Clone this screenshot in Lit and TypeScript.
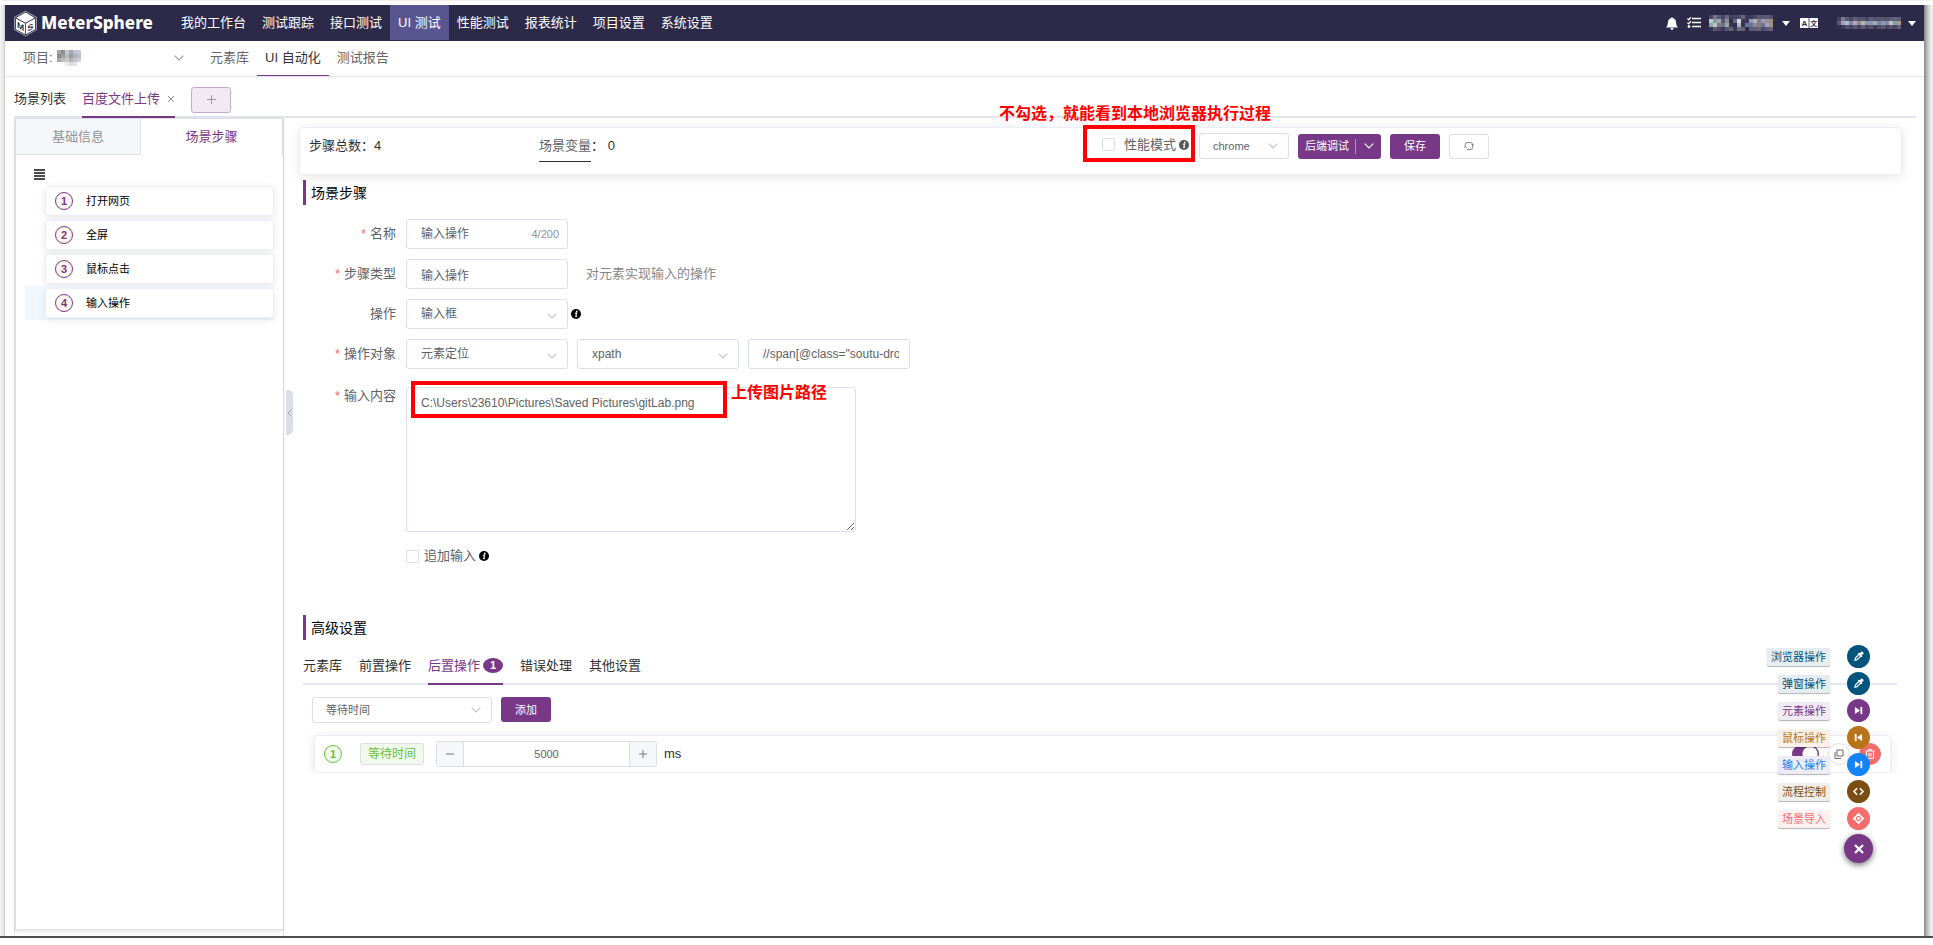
import { LitElement, html, css, svg, nothing } from "lit";
import { customElement, property, state } from "lit/decorators.js";
import { classMap } from "lit/directives/class-map.js";
import { styleMap } from "lit/directives/style-map.js";

const chevron = html`<svg class="chev" viewBox="0 0 10 6" width="10" height="6" aria-hidden="true">
  <path d="M0.7 0.7 L5 5 L9.3 0.7" fill="none" stroke="currentColor" stroke-width="1.2" />
</svg>`;

const info = html`<svg class="info" viewBox="0 0 12 12" width="10" height="10" aria-hidden="true">
  <circle cx="6" cy="6" r="6" fill="currentColor" />
  <circle cx="6.9" cy="2.9" r="1" fill="#fff" />
  <path d="M4.6 5.2 L6.8 4.8 L5.7 8.9 Q5.7 9.6 7.2 8.8" fill="none" stroke="#fff" stroke-width="1.3" />
</svg>`;

const dropper = svg`<path d="M3.6 12.6 L4.2 9.8 L9.2 4.8 L11.3 6.9 L6.3 11.9 Z" fill="none" stroke="#fff" stroke-width="1.5"/>
  <path d="M7.8 3.9 L12.2 8.3 M9.8 5.8 L12 3.6" fill="none" stroke="#fff" stroke-width="1.9"/>
  <circle cx="12.1" cy="3.9" r="2" fill="#fff"/>`;
const next = svg`<path d="M3.6 3.6 L10 8 L3.6 12.4 Z" fill="#fff"/><rect x="10.4" y="3.6" width="2.2" height="8.8" fill="#fff"/>`;
const prev = svg`<path d="M12.4 3.6 L6 8 L12.4 12.4 Z" fill="#fff"/><rect x="3.4" y="3.6" width="2.2" height="8.8" fill="#fff"/>`;
const code = svg`<path d="M6.3 4 L2.4 8 L6.3 12 M9.7 4 L13.6 8 L9.7 12" fill="none" stroke="#fff" stroke-width="1.9"/>`;
const focus = svg`<path d="M8 0.8 L11 4 H5 Z M8 15.2 L11 12 H5 Z M0.8 8 L4 5 V11 Z M15.2 8 L12 5 V11 Z" fill="#fff"/>
  <path d="M4 6.4 L6.4 4 H9.6 L12 6.4 V9.6 L9.6 12 H6.4 L4 9.6 Z" fill="none" stroke="#fff" stroke-width="1.6"/>
  <circle cx="8" cy="8" r="1.8" fill="#fff"/>`;

interface Action { label: string; color: string; tint: string; icon: unknown }

const ACTIONS: Action[] = [
  { label: "浏览器操作", color: "#00537a", tint: "#e5edf1", icon: dropper },
  { label: "弹窗操作", color: "#00537a", tint: "#e5edf1", icon: dropper },
  { label: "元素操作", color: "#783887", tint: "#f1ebf3", icon: next },
  { label: "鼠标操作", color: "#b8741a", tint: "#f9f1e8", icon: prev },
  { label: "输入操作", color: "#1483f6", tint: "#eeebf5", icon: next },
  { label: "流程控制", color: "#7a4e12", tint: "#f1eeea", icon: code },
  { label: "场景导入", color: "#f56c6c", tint: "#fdf0f0", icon: focus },
];

@customElement("pixel-mask")
class PixelMask extends LitElement {
  @property({ type: Array }) rows: string[] = [];
  @property({ type: Number }) cell = 4;

  static styles = css`
    :host { display: inline-flex; flex: none; }
    svg { display: block; }
  `;

  render() {
    const w = (this.rows[0]?.split(" ").length ?? 0) * this.cell;
    const h = this.rows.length * this.cell;
    return html`<svg width=${w} height=${h} shape-rendering="crispEdges" aria-hidden="true">
      ${this.rows.map((r, y) => r.split(" ").map((c, x) => c === "-" ? nothing : svg`
        <rect x=${x * this.cell} y=${y * this.cell} width=${this.cell} height=${this.cell} fill=${"#" + c}/>`))}
    </svg>`;
  }
}

@customElement("speed-dial")
class SpeedDial extends LitElement {
  static styles = css`
    :host { display: flex; flex-direction: column; align-items: flex-end; gap: 4px; }
    .row { display: flex; align-items: center; gap: 17px; height: 23px; padding-right: 3px; }
    .tip {
      font: 11px/18px "Liberation Sans", "Noto Sans CJK SC", sans-serif;
      padding: 0 4px; border-radius: 2px; box-shadow: 0 1px 1px rgba(0, 0, 0, 0.3);
    }
    button {
      border: 0; padding: 0; width: 23px; height: 23px; border-radius: 50%;
      display: grid; place-items: center; cursor: pointer;
    }
    .main {
      width: 29px; height: 29px; background: #783887; box-shadow: 0 2px 6px rgba(0, 0, 0, 0.55);
    }
  `;

  render() {
    return html`
      ${ACTIONS.map((a) => html`<div class="row">
        <span class="tip" style=${styleMap({ color: a.color, background: a.tint })}>${a.label}</span>
        <button aria-label=${a.label} style=${styleMap({ background: a.color })}>
          <svg viewBox="0 0 16 16" width="13" height="13">${a.icon}</svg>
        </button>
      </div>`)}
      <button class="main" aria-label="关闭">
        <svg viewBox="0 0 12 12" width="12" height="12"><path d="M2 2 L10 10 M10 2 L2 10" stroke="#fff" stroke-width="2.2"/></svg>
      </button>`;
  }
}

@customElement("app-root")
class AppRoot extends LitElement {
  @state() private wait = 5000;

  private nav = ["我的工作台", "测试跟踪", "接口测试", "UI 测试", "性能测试", "报表统计", "项目设置", "系统设置"];
  private steps = ["打开网页", "全屏", "鼠标点击", "输入操作"];
  private spaceMask = [
    "48465f 77738a 5c5a76 4a4866 6b6880 40405d 45435f 4d4a68 6a6780 3a3757 3b3959 4d4a68 5c5975 5b5873 5c5a75 55526e",
    "b9cdd0 8a9aa3 a8a6a5 5a5772 8e8b93 2c3158 67657f d7d8dc 3a3757 3b3a5c 8f95b3 b5b1a4 7c7d9b a29aa3 8d91ad a09070",
    "8ba4ad c3c1bb 7b7890 6e7489 a1a6a4 3a3757 32305a b2b7bd 35325a 5f7b98 6e7292 98839a 8a7e7a 6477a0 a9a3ba a0947f",
    "36345a 5b5875 4a4866 3c3a5a 55526e 66637b 3c3a5a 6d6a7f 66647b 2f2d4e 5d5a77 5f5c78 67637a 4f4c6b 5c5870 66637b",
  ];
  private userMask = [
    "45425f 7e7b90 5b5975 4b4967 625f79 55526e 57546f 4a4765 615e78 55526e 57546f 5a5772 55526e 5c5974 66637b 605d77",
    "5a5875 9ea2bd b6b9cc 8684a0 c2a3ae 7f8cab b9b6a4 9392ac 76a0b4 b7a4b7 7685a5 8a9bb4 8a88a3 b5c7b8 7e9db5 b09880",
    "312e4e 3f3c5c 55526e 48456a 5a5772 45425f 605d77 4b4867 585570 3f3c5c 534f6d 5d5a74 48455f 55526e 4c4968 625f76",
  ];
  private projectMask = [
    "a3a4a8 8d8e93 c9c9cc a7a9b0 bcc4cf c5ccd8",
    "8b8b8f 9fa0a3 b9bdc0 9c9ea2 aab3bf b6becb",
    "a9a9ad bdbdc0 c8c8cb b0b1b5 c3c4c8 c9ced8",
    "- - e9e9ea dcdcdf e2e2e5 -",
  ];

  static styles = css`
    :host {
      --brand: #783887;
      --line: #dcdfe6;
      --rule: #e4e7ed;
      display: flex; flex-direction: column; box-sizing: border-box;
      min-height: 100vh; padding-bottom: 7px; background: #fff; color: #303133;
      font: 13px/20px "Liberation Sans", "Noto Sans CJK SC", sans-serif;
    }
    * { box-sizing: border-box; }
    a { color: inherit; text-decoration: none; }
    button, input, select, textarea { font: inherit; color: inherit; margin: 0; }
    button { cursor: pointer; }
    svg { display: block; flex: none; }

    .frame {
      flex: 1; display: grid; grid-template-columns: 5px minmax(0, 1fr) 9px;
      border-top: 1px solid #f0f0f0; border-bottom: 2px solid #4d4d4d; padding-top: 4px;
    }
    .edge-l { background: linear-gradient(90deg, #f2f2f2, #eaeaea 60%, #c8c8c8); }
    .edge-r { background: linear-gradient(90deg, #868686, #c2c2c2 40%, #ececec 75%, #f0f0f0); }
    .app { position: relative; display: flex; flex-direction: column; background: #fff; }

    .top { display: flex; align-items: center; height: 36px; background: #2d2a49; color: #fff; padding: 0 8px 0 9px; }
    .brand { display: flex; align-items: center; gap: 4px; width: 159px; }
    .word { font: 800 17px/24px "Noto Sans", "Open Sans", sans-serif; }
    .nav { display: flex; align-self: stretch; flex: 1; }
    .nav a { display: flex; align-items: center; padding: 0 8px; height: 35px; }
    .nav a.on { background: #595591; }
    .tools { display: flex; align-items: center; }
    .tools .list { margin: 0 8px 0 9px; }
    .tools .caret { margin-left: 9px; }
    .tools .lang { margin: 0 19px 0 10px; }
    .tools .caret.last { margin-left: 7px; }

    .sub { display: flex; align-items: stretch; height: 36px; border-bottom: 1px solid #e5e5e9; color: #666; padding-left: 18px; }
    .project { display: flex; align-items: center; width: 161px; gap: 4px; margin-right: 18px; padding-bottom: 1px; }
    .project .chev { margin-left: auto; color: #999; }
    .sub a { display: flex; align-items: center; padding: 0 8px 1px; }
    .sub a.on { color: #303133; border-bottom: 1px solid var(--brand); }

    .tabs { display: flex; align-items: stretch; height: 41px; margin: 0 8px 0 9px; border-bottom: 2px solid #e3e4ec; }
    .tabs a { display: flex; align-items: center; padding-top: 5px; margin-right: 16px; gap: 7px; }
    .tabs a.on { color: var(--brand); border-bottom: 2px solid var(--brand); margin-bottom: -2px; }
    .tabs svg { color: #999; }
    .add {
      align-self: center; display: grid; place-items: center; width: 40px; height: 26px; padding: 0;
      margin-top: 6px; background: #f2eaf3; border: 1px solid #c9a9d0; border-radius: 3px; color: #999;
    }

    .body { flex: 1; display: flex; margin-left: 9px; }
    .side { width: 270px; flex: none; border-left: 1px solid #e6e6e9; border-right: 1px solid #e0e0e5; padding-bottom: 6px; display: flex; flex-direction: column; }
    .panel { flex: 1; border: solid var(--line); border-width: 1px 0 1px 1px; box-shadow: 0 2px 4px rgba(0, 0, 0, 0.1); }
    .ptabs { display: grid; grid-template-columns: 125px 1fr; height: 36px; }
    .ptabs button { border: 0; background: none; padding: 0; color: var(--brand); }
    .ptabs button.off { background: #f5f7fa; color: #909399; border: solid var(--line); border-width: 0 1px 1px 0; }
    .ptabs button.cur { border-right: 1px solid var(--line); }
    .menu { margin: 14px 0 4px 18px; display: block; border: 0; padding: 0; background: none; }
    .steps { list-style: none; margin: 0 9px; padding: 0; }
    .steps li { padding: 2px 0 2px 20px; }
    .steps li.on { background: #f0f7ff; }
    .step {
      display: flex; align-items: center; gap: 13px; height: 30px; width: 100%; padding: 0 9px; text-align: left;
      font-size: 11px; color: #000; background: #fff; border: 1px solid #ebeef5; border-radius: 3px;
      box-shadow: 0 2px 10px rgba(0, 0, 0, 0.09);
    }
    .num {
      display: grid; place-items: center; width: 18px; height: 18px; border-radius: 50%; flex: none;
      border: 1px solid var(--brand); background: #fcf6ee; color: var(--brand); font-weight: 700; font-size: 11px; line-height: 16px;
    }
    .num.green { border-color: #67c23a; background: #f0f9eb; color: #67c23a; }
    .grip { align-self: flex-start; display: grid; place-items: center; width: 7px; height: 45px; margin: 272px 0 0 2px; padding: 0; border: 0; background: var(--line); border-radius: 0 5px 5px 0; color: #999; }

    .main { flex: 1; min-width: 0; padding: 9px 22px 0 6px; }
    .bar {
      display: flex; align-items: center; height: 48px; padding: 0 9px 10px; border: 1px solid #ebeef5;
      border-radius: 4px; box-shadow: 0 2px 12px rgba(0, 0, 0, 0.1); position: relative;
    }
    .total { width: 230px; }
    .vars { width: 544px; display: flex; }
    .vars a { color: #606266; border-bottom: 1px solid #303133; padding: 5px 0; margin: -5px 0; }
    .mark { position: relative; display: flex; align-items: center; align-self: flex-start; height: 37px; margin-top: -3px; width: 112px; border: 4px solid #f00; padding: 2px 5px 0 15px; }
    .note { position: absolute; color: #f00; font-size: 16px; line-height: 24px; font-weight: 700; white-space: nowrap; }
    .mark .note { left: -88px; top: -27px; }
    .check { display: flex; align-items: center; color: #606266; gap: 5px; white-space: nowrap; }
    .mark .check { gap: 9px; }
    .mark .info { color: #555; margin-left: 3px; }
    .check input { appearance: none; width: 13px; height: 13px; border: 1px solid var(--line); border-radius: 1px; background: #fff; }
    .pick { display: grid; align-items: center; color: #606266; }
    .pick > * { grid-area: 1 / 1; }
    .pick .chev { justify-self: end; margin: 4px 11px 0 0; color: #c0c4cc; pointer-events: none; }
    select, .box, textarea { border: 1px solid var(--line); border-radius: 3px; background: #fff; color: #606266; outline: 0; }
    select { appearance: none; width: 100%; height: 30px; padding: 0 28px 0 14px; font-size: 12px; }
    .small select { height: 26px; font-size: 11px; padding-left: 13px; }
    .small .chev { margin-top: 0; }
    .browser { width: 90px; margin: 0 9px 0 4px; }
    .btn {
      display: flex; align-items: center; justify-content: center; height: 25px; padding: 0; border: 0;
      border-radius: 3px; background: var(--brand); color: #fff; font-size: 11px; width: 50px;
    }
    .split { width: 83px; margin-right: 9px; }
    .split .div { width: 1px; height: 15px; background: #b48fbd; margin: 0 8px 0 6px; }
    .btn.ghost { width: 40px; background: #fff; border: 1px solid var(--line); color: #777; margin-left: 9px; }

    h2 { display: flex; align-items: center; height: 25px; margin: 5px 0 14px 4px; padding-left: 5px; border-left: 3px solid var(--brand); font-size: 14px; font-weight: 400; color: #000; }
    .form { display: grid; grid-template-columns: 97px minmax(0, 1fr); gap: 10px; color: #606266; }
    .form > label { justify-self: end; align-self: center; }
    .form .req::before { content: "*"; color: #f56c6c; margin-right: 4px; }
    .line { display: flex; align-items: center; gap: 9px; }
    .line .info { color: #000; margin-left: -6px; }
    .f { width: 162px; }
    .box { height: 30px; padding: 0 10px 0 14px; font-size: 12px; }
    .counted { display: flex; align-items: center; padding-right: 8px; }
    .counted input { border: 0; outline: 0; padding: 0; background: none; flex: 1; min-width: 0; }
    .counted output { font-size: 11px; color: #909399; }
    .hint { color: #888; margin-left: 9px; }
    .form > label.up { align-self: start; margin-top: 7px; }
    .area { position: relative; width: 450px; margin-top: 8px; }
    textarea { display: block; width: 100%; height: 145px; padding: 5px 14px; font-size: 12px; resize: vertical; }
    .ring { position: absolute; left: 5px; top: -6px; width: 316px; height: 37px; border: 4px solid #f00; pointer-events: none; }
    .area .note { left: 325px; top: -6px; }
    .extra { grid-column: 2; margin-top: 4px; }

    .adv { margin: 49px 0 12px 4px; }
    .atabs { display: flex; height: 33px; margin: 0 5px 0 4px; border-bottom: 2px solid var(--rule); gap: 17px; }
    .atabs a { display: flex; gap: 3px; align-items: center; padding-bottom: 4px; }
    .atabs a.on { color: var(--brand); border-bottom: 2px solid var(--brand); margin-bottom: -2px; }
    .badge { width: 20px; height: 15px; border-radius: 50%; background: var(--brand); color: #fff; font: 700 11px/15px "Liberation Sans", sans-serif; text-align: center; }
    .addrow { display: flex; gap: 9px; padding: 12px 0 0 13px; }
    .addrow .pick { width: 180px; }
    .clip { overflow: hidden; padding: 12px 6px 0 4px; margin-right: 5px; }
    .op {
      display: flex; align-items: center; height: 38px; margin-left: 11px; padding: 0 9px; border: 1px solid #ebeef5;
      border-radius: 4px; box-shadow: 0 2px 12px rgba(0, 0, 0, 0.1);
    }
    .tag { margin: 0 12px 0 18px; padding: 0 7px; font-size: 12px; line-height: 20px; color: #67c23a; background: #f0f9eb; border: 1px solid #dcdfe6; border-radius: 3px; }
    .stepper { display: grid; grid-template-columns: 26px 1fr 26px; width: 221px; height: 26px; margin-right: 7px; border: 1px solid var(--line); border-radius: 3px; overflow: hidden; }
    .stepper button { border: 0; padding: 0; background: #f5f7fa; display: grid; place-items: center; color: #777; }
    .stepper input { width: 100%; border: solid var(--line); border-width: 0 1px; text-align: center; font-size: 11px; color: #606266; outline: 0; padding: 0; }
    .ends { margin-left: auto; display: flex; align-items: center; gap: 9px; }
    .switch { appearance: none; width: 27px; height: 18px; border-radius: 9px; background: radial-gradient(circle at 18px 9px, #fff 7px, transparent 8px), var(--brand); }
    .round { width: 22px; height: 22px; border-radius: 50%; border: 1px solid var(--line); background: #fff; padding: 0; display: grid; place-items: center; color: #666; }
    .round.del { background: #f56c6c; border-color: #f56c6c; color: #fff; }
    speed-dial { position: absolute; right: 51px; bottom: 73px; }
  `;

  private pick(id: string, value: string, cls: string, label?: string) {
    return html`<span class="pick ${cls}"><select id=${id} aria-label=${label ?? nothing}><option>${value}</option></select>${chevron}</span>`;
  }

  private header() {
    return html`<header class="top">
      <div class="brand">
        <svg viewBox="0 0 24 27" width="23" height="27" aria-hidden="true">
          <path d="M12 0.6 L23.4 7 V20 L12 26.4 L0.6 20 V7 Z" fill="none" stroke="#c9c8d4" stroke-width="0.8"/>
          <path d="M12 2 L21.6 7.4 L12 12.6 L2.4 7.4 Z" fill="#fff"/>
          <path d="M2 8.4 L11.6 13.6 V24.8 L2 19.4 Z M22 8.4 L12.4 13.6 V24.8 L22 19.4 Z" fill="#fff"/>
          <g fill="#2d2a49" font-family="Liberation Sans, sans-serif" font-weight="700" font-size="9">
            <text transform="translate(3.1 17.6) skewY(28)">M</text>
            <text transform="translate(14.2 22) skewY(-28)">S</text>
          </g>
        </svg>
        <span class="word">MeterSphere</span>
      </div>
      <nav class="nav">${this.nav.map((n) => html`<a href="#" class=${classMap({ on: n === "UI 测试" })}>${n}</a>`)}</nav>
      <div class="tools">
        <svg viewBox="0 0 12 13" width="12" height="13"><path d="M6 0 L7 1.2 Q10 2 10.2 6 Q10.3 9 12 10.4 H0 Q1.7 9 1.8 6 Q2 2 5 1.2 Z M4.4 11 H7.6 Q7.4 13 6 13 Q4.6 13 4.4 11" fill="#fff"/></svg>
        <svg class="list" viewBox="0 0 14 12" width="14" height="12"><path d="M5 1.5 H14 M5 5.5 H14 M5 9.5 H14" stroke="#fff" stroke-width="1.6"/><path d="M0.4 1.6 L1.6 2.8 L4 0.3 M0.4 5.6 L1.6 6.8 L4 4.3" fill="none" stroke="#fff" stroke-width="1.3"/><circle cx="2" cy="9.6" r="1.4" fill="#fff"/></svg>
        <pixel-mask .rows=${this.spaceMask}></pixel-mask>
        <svg class="caret" viewBox="0 0 8 5" width="8" height="5"><path d="M0 0 H8 L4 5 Z" fill="#fff"/></svg>
        <svg class="lang" viewBox="0 0 18 10" width="18" height="10"><rect width="8.6" height="10" rx="0.6" fill="#fff"/><rect x="9.4" width="8.6" height="10" rx="0.6" fill="#fff"/>
          <g fill="#2d2a49" font-weight="700"><text x="1.4" y="8" font-size="8" font-family="Liberation Sans, sans-serif">A</text><text x="10.2" y="7.8" font-size="7" font-family="Noto Sans CJK SC, sans-serif">文</text></g></svg>
        <pixel-mask .rows=${this.userMask}></pixel-mask>
        <svg class="caret last" viewBox="0 0 8 5" width="8" height="5"><path d="M0 0 H8 L4 5 Z" fill="#fff"/></svg>
      </div>
    </header>`;
  }

  private side() {
    return html`<aside class="side"><div class="panel">
      <div class="ptabs"><button class="off">基础信息</button><button class="cur">场景步骤</button></div>
      <button class="menu" aria-label="菜单"><svg viewBox="0 0 11 11" width="11" height="11"><path d="M0 1 H11 M0 4 H11 M0 7 H11 M0 10 H11" stroke="#111" stroke-width="1.5"/></svg></button>
      <ol class="steps">${this.steps.map((s, i) => html`<li class=${classMap({ on: i === 3 })}>
        <button class="step"><span class="num">${i + 1}</span>${s}</button></li>`)}</ol>
    </div></aside>`;
  }

  private toolbar() {
    return html`<section class="bar">
      <div class="total">步骤总数：4</div>
      <div class="vars"><a href="#">场景变量</a>： 0</div>
      <div class="mark">
        <label class="check"><input type="checkbox">性能模式</label>${info}
        <span class="note">不勾选，就能看到本地浏览器执行过程</span>
      </div>
      ${this.pick("browser", "chrome", "small browser", "浏览器")}
      <button class="btn split">后端调试<span class="div"></span>${chevron}</button>
      <button class="btn">保存</button>
      <button class="btn ghost" aria-label="刷新"><svg viewBox="0 0 10 10" width="10" height="10"><path d="M1.3 6 V3.4 Q1.3 1.6 3.2 1.6 H7 Q8.6 1.8 8.6 4 M8.7 4 V6.6 Q8.7 8.4 6.8 8.4 H3 M7.4 3.4 L8.6 4.8 L9.8 3.4 M0.2 6.8 L1.4 5.4 L2.6 6.8" fill="none" stroke="currentColor" stroke-width="0.9"/></svg></button>
    </section>`;
  }

  private form() {
    return html`<h2>场景步骤</h2>
    <div class="form">
      <label class="req" for="name">名称</label>
      <div class="line"><span class="box f counted"><input id="name" .value=${"输入操作"}><output for="name">4/200</output></span></div>
      <label class="req" for="type">步骤类型</label>
      <div class="line"><input class="box f" id="type" .value=${"输入操作"}><span class="hint">对元素实现输入的操作</span></div>
      <label for="oper">操作</label>
      <div class="line">${this.pick("oper", "输入框", "f")}${info}</div>
      <label class="req" for="target">操作对象</label>
      <div class="line">${this.pick("target", "元素定位", "f")}${this.pick("locator", "xpath", "f", "定位方式")}
        <input class="box f" aria-label="定位表达式" .value=${"//span[@class=\"soutu-drop\"]"}></div>
      <label class="req up" for="content">输入内容</label>
      <div class="area"><textarea id="content" .value=${"C:\\Users\\23610\\Pictures\\Saved Pictures\\gitLab.png"}></textarea>
        <div class="ring"></div><span class="note">上传图片路径</span></div>
      <div class="line extra"><label class="check"><input type="checkbox">追加输入</label>${info}</div>
    </div>`;
  }

  private advanced() {
    return html`<h2 class="adv">高级设置</h2>
    <nav class="atabs"><a href="#">元素库</a><a href="#">前置操作</a><a href="#" class="on">后置操作<span class="badge">1</span></a><a href="#">错误处理</a><a href="#">其他设置</a></nav>
    <div class="addrow">${this.pick("post", "等待时间", "small", "后置操作类型")}<button class="btn">添加</button></div>
    <div class="clip"><div class="op">
      <span class="num green">1</span><span class="tag">等待时间</span>
      <div class="stepper">
        <button aria-label="减少" @click=${() => (this.wait -= 1000)}><svg width="8" height="8"><path d="M0 4 H8" stroke="currentColor"/></svg></button>
        <input aria-label="等待时间" .value=${String(this.wait)}>
        <button aria-label="增加" @click=${() => (this.wait += 1000)}><svg width="8" height="8"><path d="M0 4 H8 M4 0 V8" stroke="currentColor"/></svg></button>
      </div>ms
      <div class="ends"><input class="switch" type="checkbox" role="switch" aria-label="启用" checked>
        <button class="round" aria-label="复制"><svg viewBox="0 0 10 10" width="10" height="10"><path d="M3 1 H9 V7 H3 Z M1 3 V9.4 H7" fill="none" stroke="currentColor"/></svg></button>
        <button class="round del" aria-label="删除"><svg viewBox="0 0 10 10" width="10" height="10"><path d="M0.5 2 H9.5 M3.5 1.8 V0.6 H6.5 V1.8 M1.5 2.4 V9.4 H8.5 V2.4 M4 4 V7.6 M6 4 V7.6" fill="none" stroke="currentColor"/></svg></button></div>
    </div></div>`;
  }

  render() {
    return html`<div class="frame">
      <div class="edge-l"></div>
      <div class="app">
        ${this.header()}
        <div class="sub">
          <div class="project">项目: <pixel-mask .rows=${this.projectMask}></pixel-mask>${chevron}</div>
          <a href="#">元素库</a><a href="#" class="on">UI 自动化</a><a href="#">测试报告</a>
        </div>
        <div class="tabs">
          <a href="#">场景列表</a>
          <a href="#" class="on">百度文件上传<svg width="8" height="8"><path d="M1 1 L7 7 M7 1 L1 7" stroke="currentColor"/></svg></a>
          <button class="add" aria-label="新建"><svg width="9" height="9"><path d="M0 4.5 H9 M4.5 0 V9" stroke="currentColor"/></svg></button>
        </div>
        <div class="body">
          ${this.side()}
          <button class="grip" aria-label="收起"><svg width="5" height="8"><path d="M4.5 0.5 L1 4 L4.5 7.5" fill="none" stroke="currentColor" stroke-width="0.8"/></svg></button>
          <main class="main">${this.toolbar()}${this.form()}${this.advanced()}</main>
        </div>
        <speed-dial></speed-dial>
      </div>
      <div class="edge-r"></div>
    </div>`;
  }
}
